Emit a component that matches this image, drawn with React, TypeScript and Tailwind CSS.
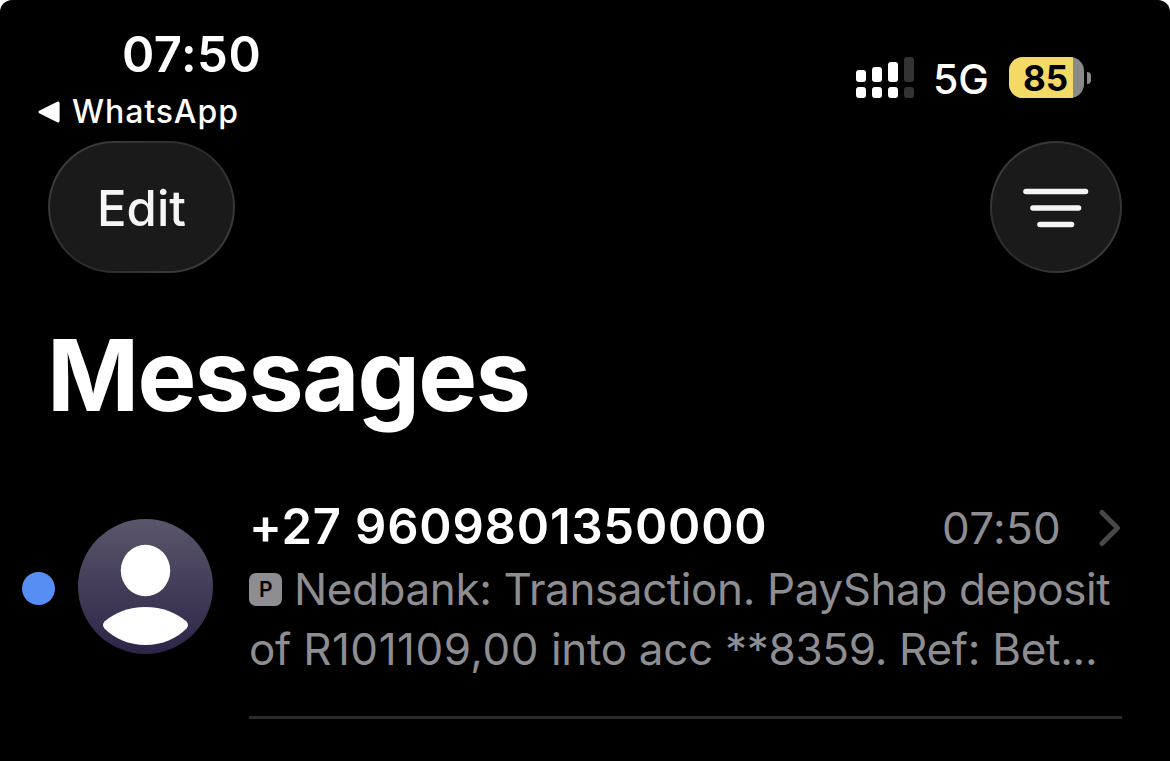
const bars = [
  { height: 'h-[12px]', color: 'bg-white' },
  { height: 'h-[15px]', color: 'bg-white' },
  { height: 'h-[20px]', color: 'bg-white' },
  { height: 'h-[25px]', color: 'bg-[#333333]' },
];

function SignalBars() {
  return (
    <div className="flex items-end gap-[6px]">
      {bars.map((bar) => (
        <div key={bar.height} className="flex flex-col gap-[5px]">
          <div className={`w-[10px] rounded-[3px] ${bar.height} ${bar.color}`} />
          <div className={`w-[10px] h-[11px] rounded-[3px] ${bar.color}`} />
        </div>
      ))}
    </div>
  );
}

function Battery() {
  return (
    <div className="flex items-center gap-[3px]">
      <div className="flex w-[75px] h-[41px] rounded-[14px] overflow-hidden bg-[#8a8a8a]">
        <div className="w-[64px] bg-[#f3d965] flex items-center justify-center">
          <span className="text-[35px] leading-none font-bold text-black pl-[9px] pt-px">85</span>
        </div>
      </div>
      <div className="w-[4px] h-[12px] rounded-r-full bg-[#8a8a8a]" />
    </div>
  );
}

function StatusBar() {
  return (
    <header className="h-[141px] flex justify-between">
      <div className="pt-[25px] pl-[38px]">
        <p className="text-[49px] leading-[60px] font-semibold pl-[84px] tracking-[0.5px]">07:50</p>
        <div className="flex items-center pt-[10px]">
          <svg width="22" height="22" viewBox="0 0 22 22" fill="white">
            <path d="M1.2 9.8 19.2.8Q21.600 0 21.600 2.500V19.500Q21.600 22 19.200 21.200L1.200 12.200Q-.5 11 1.200 9.800Z" />
          </svg>
          <span className="text-[32px] leading-[34px] font-medium tracking-[0.9px] pl-[12px]">WhatsApp</span>
        </div>
      </div>
      <div className="flex items-center h-[41px] mt-[57px] pr-[79px]">
        <SignalBars />
        <span className="text-[41px] leading-none font-medium w-[95px] pl-[19px] pt-[3px]">5G</span>
        <Battery />
      </div>
    </header>
  );
}

function FilterIcon() {
  return (
    <svg width="66" height="40" viewBox="0 0 66 40" stroke="#f5f5f5" strokeWidth="5.600" strokeLinecap="round">
      <path d="M3 3.500H62.500M10 20H55.500M17 36.500H48.500" />
    </svg>
  );
}

function Avatar() {
  return (
    <svg width="135" height="135" viewBox="0 0 135 135">
      <defs>
        <linearGradient id="avatar" x1="0" y1="0" x2="0" y2="1">
          <stop offset="0" stopColor="#5a566b" />
          <stop offset="1" stopColor="#2d2547" />
        </linearGradient>
      </defs>
      <circle cx="67.500" cy="67.500" r="67.500" fill="url(#avatar)" />
      <ellipse cx="67.500" cy="51.500" rx="24.700" ry="25.700" fill="white" />
      <path
        d="M26.500 102.500C36 94 51 88 67.500 88S99 94 108.500 102.500Q111.500 106 108.500 109.500C99 119.500 84 126 67.500 126S36 119.500 26.500 109.500Q23.500 106 26.500 102.500Z"
        fill="white"
      />
    </svg>
  );
}

function Conversation() {
  return (
    <article className="flex items-start pl-[22px] pr-[48px]">
      <div className="size-[33px] shrink-0 rounded-full bg-[#568ef3] mt-[72px]" />
      <div className="shrink-0 ml-[23px] mt-[19px]">
        <Avatar />
      </div>
      <div className="ml-[36px] flex-1 min-w-0 h-[219px] border-b-[3px] border-[#2b2b2c]">
        <div className="flex items-center justify-between h-[54px]">
          <h2 className="text-[49px] leading-[54px] font-semibold whitespace-nowrap tracking-[0.8px]">
            +27 9609801350000
          </h2>
          <div className="flex items-center pt-[2px]">
            <time className="text-[44px] leading-[50px] text-[#8d8d92] tracking-[0.3px]">07:50</time>
            <svg className="ml-[36px]" width="25" height="38" viewBox="0 0 25 38" fill="none" stroke="#48484a" strokeWidth="5" strokeLinecap="round" strokeLinejoin="round">
              <path d="M5 3.500 20.500 19 5 34.500" />
            </svg>
          </div>
        </div>
        <div className="text-[44px] leading-[60px] text-[#8d8d92] whitespace-nowrap pt-[5px]">
          <p className="flex items-center tracking-[-0.4px]">
            <span className="size-[33px] shrink-0 rounded-[7px] bg-[#8d8d92] text-black text-[21px] leading-none font-semibold flex items-center justify-center">
              P
            </span>
            <span className="pl-[12px]">Nedbank: Transaction. PayShap deposit</span>
          </p>
          <p className="tracking-[-0.3px]">
            of <span className="tracking-[0.5px]">R101109,00</span> into acc **8359. Ref: Bet...
          </p>
        </div>
      </div>
    </article>
  );
}

export default function App() {
  return (
    <div className="bg-white w-[1170px] h-[761px] overflow-hidden">
      <div className="h-full bg-black text-white rounded-t-[12px] font-['Inter',sans-serif]">
        <StatusBar />
        <nav className="flex justify-between px-[48px]">
          <button
            type="button"
            className="w-[187px] h-[132px] rounded-[66px] p-[2px] bg-linear-135 from-[#414141] via-[#2b2b2b] to-[#414141]"
          >
            <span className="flex size-full items-center justify-center rounded-[64px] bg-[#1a1a1a] text-[49px] leading-none font-medium text-[#f5f5f5] pt-[2px]">
              Edit
            </span>
          </button>
          <button
            type="button"
            aria-label="Filter"
            className="size-[132px] rounded-full p-[2px] bg-linear-135 from-[#414141] via-[#2b2b2b] to-[#414141]"
          >
            <span className="flex size-full items-center justify-center rounded-full bg-[#1a1a1a] pt-[2px]">
              <FilterIcon />
            </span>
          </button>
        </nav>
        <h1 className="pt-[42px] h-[227px] pl-[47px] text-[99px] leading-[120px] font-bold tracking-[-1.8px]">Messages</h1>
        <Conversation />
      </div>
    </div>
  );
}
